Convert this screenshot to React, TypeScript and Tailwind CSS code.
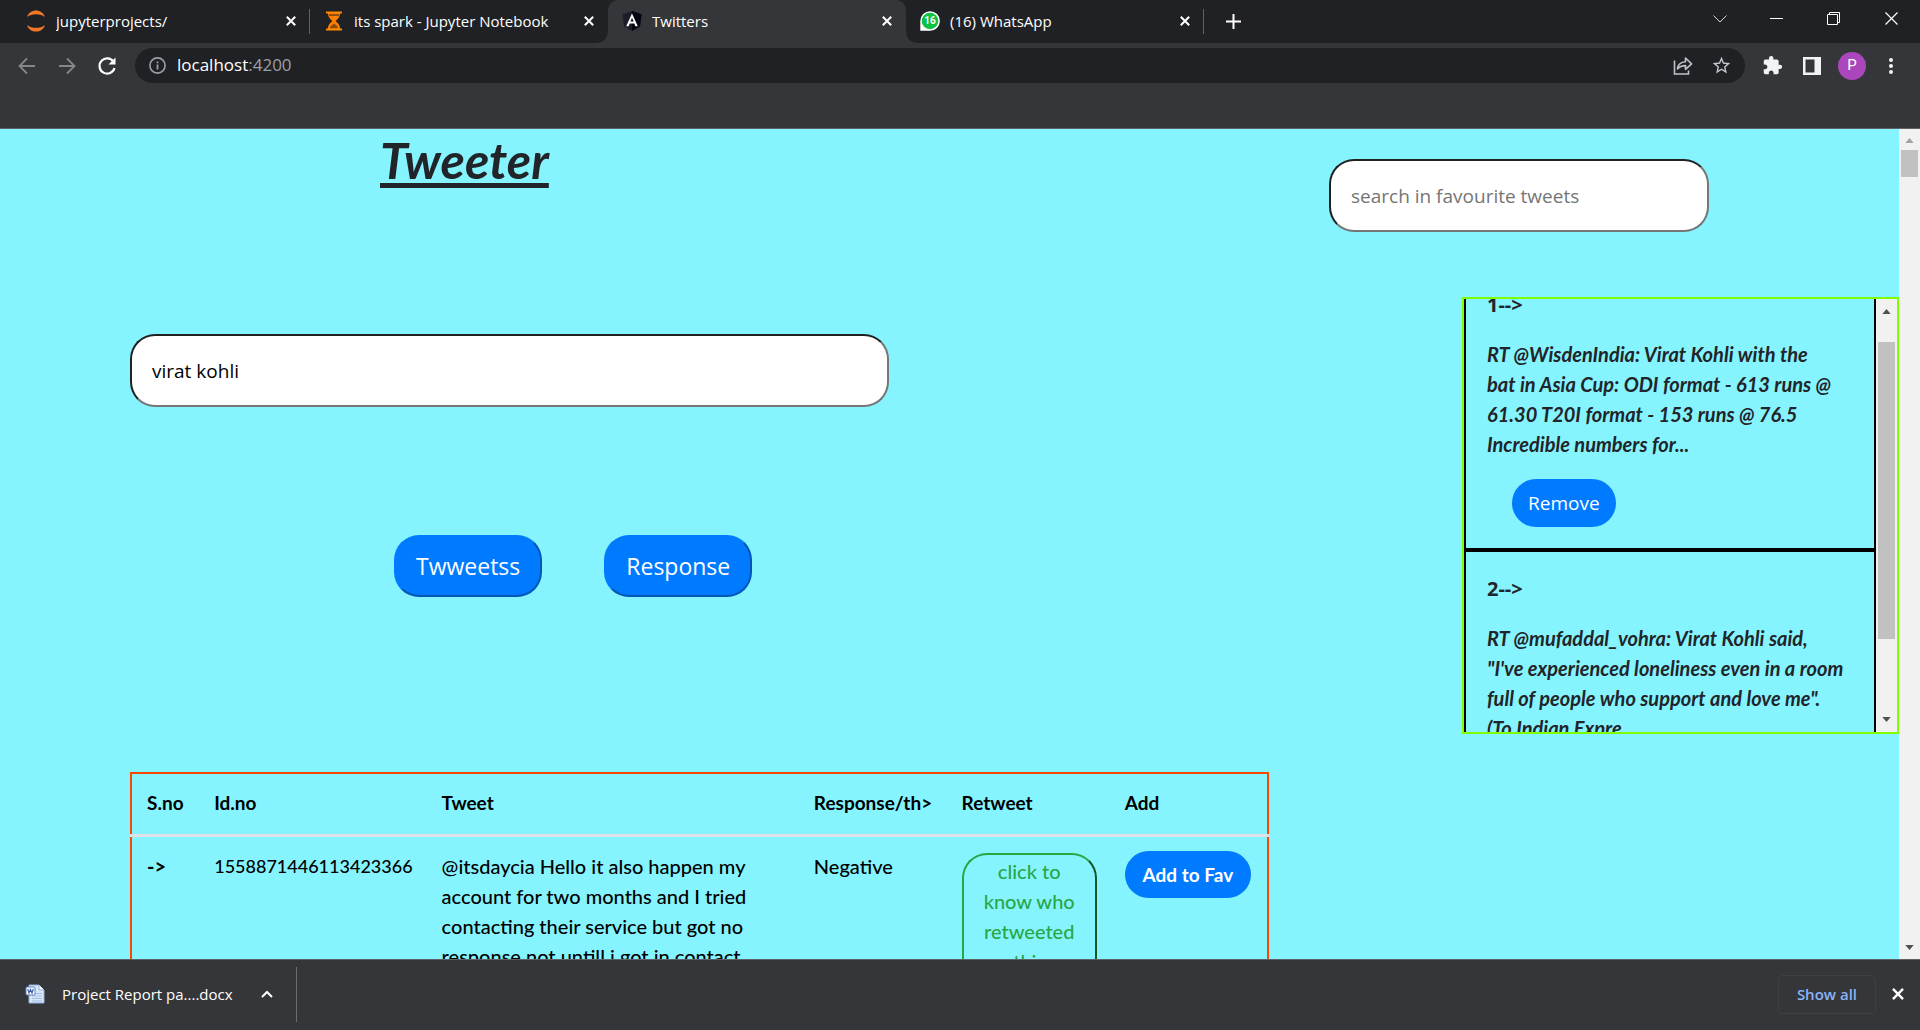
import React from "react";
import { MdExtension, MdStarOutline } from "react-icons/md";

type IconProps = { className?: string };

function CloseIcon({ className = "h-[10px] w-[10px]" }: IconProps) {
  return (
    <svg viewBox="0 0 10 10" className={className} fill="none" stroke="currentColor" strokeWidth="2">
      <path d="M0.8 0.8 L9.2 9.2 M9.2 0.8 L0.8 9.2" />
    </svg>
  );
}

function JupyterIcon() {
  return (
    <svg viewBox="0 0 20 26" className="h-[26px] w-5" fill="#f37726">
      <path d="M1 9 C3.500 0.200 16.500 0.200 19 9 C14.500 5.200 5.500 5.200 1 9Z" />
      <path d="M1 17 C3.500 25.800 16.500 25.800 19 17 C14.500 20.800 5.500 20.800 1 17Z" />
    </svg>
  );
}

function HourglassIcon() {
  return (
    <svg viewBox="0 0 20 20" className="h-5 w-5">
      <path d="M4 2 C4 7 7 8.500 8.500 10 C7 11.500 4 13 4 18 H16 C16 13 13 11.500 11.500 10 C13 8.500 16 7 16 2Z" fill="#ff8000" />
      <path d="M5 4 H15" stroke="#202124" strokeWidth="1" />
      <path d="M6 17.500 C6 14.500 8.500 14 10 12.500 C11.500 14 14 14.500 14 17.500Z" fill="#8a4a0a" />
      <path d="M2 1.500 H18 M2 18.500 H18" stroke="#ff8a00" strokeWidth="2" />
    </svg>
  );
}

function AngularIcon() {
  return (
    <svg viewBox="0 0 20 20" className="h-5 w-5">
      <path d="M10 0 L19.500 3.300 L18 15.500 L10 20 L2 15.500 L0.500 3.300Z" fill="#1b1d29" />
      <path d="M10 0 L19.500 3.300 L18 15.500 L10 20Z" fill="#05060f" />
      <path d="M10 2.500 L4.200 15.300 H6.600 L7.700 12.500 H12.300 L13.400 15.300 H15.800Z M10 6.700 L11.600 10.600 H8.400Z" fill="#fff" fillRule="evenodd" />
    </svg>
  );
}

function WhatsAppIcon() {
  return (
    <span className="relative flex h-5 w-5 items-center justify-center">
      <svg viewBox="0 0 20 20" className="absolute inset-0 h-5 w-5">
        <path d="M0.300 19.800 V10 A9.800 9.800 0 1 1 10 19.800Z" fill="#fff" />
        <circle cx="10" cy="10" r="8.300" fill="#0cc143" />
      </svg>
      <span className="relative font-['Roboto'] text-[10px] font-bold leading-none text-white">16</span>
    </span>
  );
}

function ShareIcon() {
  return (
    <svg viewBox="0 0 20 20" className="h-5 w-5" fill="none" stroke="#bdc1c6" strokeWidth="1.600">
      <path d="M1.500 4.500 V18 H15.500 V14.500" />
      <path d="M4.500 13 C5 8.500 8 6 12.500 5.800 V2 L18.600 7.800 L12.500 13.300 V9.600 C9 9.600 6.500 10.500 4.500 13Z" strokeLinejoin="round" />
    </svg>
  );
}

function WordIcon() {
  return (
    <svg viewBox="0 0 20 20" className="h-5 w-5">
      <path d="M4 1 H14 L19 6 V19 H4Z" fill="#dce8f8" stroke="#8fb0dc" />
      <path d="M14 1 V6 H19" fill="#fff" stroke="#8fb0dc" />
      <path d="M7 9.500 H17 M7 12 H17 M7 14.500 H17 M7 17 H17" stroke="#9dbbe4" />
      <rect x="1" y="3" width="9" height="8" rx="1" fill="#fff" stroke="#5b80bd" />
      <path d="M2.800 5 L4 9 L5.500 5.500 L7 9 L8.300 5" fill="none" stroke="#3c5fa5" strokeWidth="1.200" />
    </svg>
  );
}

function Arrow({ down = false, tone = "#505050" }: { down?: boolean; tone?: string }) {
  return (
    <svg viewBox="0 0 10 6" className="h-[5px] w-[9px]">
      <path d={down ? "M0 0 H10 L5 6Z" : "M0 6 L5 0 L10 6Z"} fill={tone} />
    </svg>
  );
}

const tabs = [
  { title: "jupyterprojects/", icon: <JupyterIcon />, active: false, rule: true },
  { title: "its spark - Jupyter Notebook", icon: <HourglassIcon />, active: false, rule: false },
  { title: "Twitters", icon: <AngularIcon />, active: true, rule: false },
  { title: "(16) WhatsApp", icon: <WhatsAppIcon />, active: false, rule: true },
];

function TabStrip() {
  return (
    <header className="flex h-[43px] shrink-0 bg-[#202124] pl-3">
      {tabs.map((tab) => (
        <div
          key={tab.title}
          className={
            "relative flex w-[298px] items-center gap-[10px] pb-[2px] pl-[14px] pr-[14px] " +
            (tab.active ? "rounded-t-[10px] bg-[#35363a]" : "")
          }
        >
          {tab.active && (
            <>
              <span className="absolute -left-[10px] bottom-0 h-[10px] w-[10px] bg-[radial-gradient(circle_at_0_0,#202124_9px,#35363a_10px)]" />
              <span className="absolute -right-[10px] bottom-0 h-[10px] w-[10px] bg-[radial-gradient(circle_at_100%_0,#202124_9px,#35363a_10px)]" />
            </>
          )}
          {tab.icon}
          <span className="flex-1 truncate text-[15px] leading-5 text-white">{tab.title}</span>
          <button aria-label={"Close " + tab.title} className="text-white">
            <CloseIcon />
          </button>
          {tab.rule && <span className="absolute right-0 top-[9px] h-[25px] w-px bg-[#5f6368]" />}
        </div>
      ))}
      <button aria-label="New tab" className="ml-[22px] flex items-center pb-px text-white">
        <svg viewBox="0 0 15 15" className="h-[15px] w-[15px]" stroke="currentColor" strokeWidth="2">
          <path d="M7.500 0 V15 M0 7.500 H15" />
        </svg>
      </button>
      <div className="ml-auto flex h-[37px] text-white">
        <button aria-label="Search tabs" className="flex w-[57px] items-center justify-center">
          <svg viewBox="0 0 14 8" className="h-2 w-[14px]" fill="none" stroke="#d5d6d8">
            <path d="M0.500 0.500 L7 7 L13.500 0.500" />
          </svg>
        </button>
        <button aria-label="Minimize" className="flex w-[57px] items-center justify-center">
          <span className="h-px w-[13px] bg-white" />
        </button>
        <button aria-label="Restore" className="flex w-[57px] items-center justify-center">
          <svg viewBox="0 0 13 13" className="h-[13px] w-[13px]" fill="none" stroke="currentColor">
            <path d="M0.500 2.500 H10.500 V12.500 H0.500Z M2.500 2.500 V0.500 H12.500 V10.500 H10.500" />
          </svg>
        </button>
        <button aria-label="Close window" className="flex w-[58px] items-center justify-center">
          <svg viewBox="0 0 13 13" className="h-[13px] w-[13px]" fill="none" stroke="currentColor" strokeWidth="1.200">
            <path d="M0.500 0.500 L12.500 12.500 M12.500 0.500 L0.500 12.500" />
          </svg>
        </button>
      </div>
    </header>
  );
}

function Toolbar() {
  return (
    <div className="h-[86px] shrink-0 border-b border-[#5f6368] bg-[#35363a] pt-[5px]">
      <div className="flex h-[35px] items-center pl-[18px] pr-[26px]">
        <button aria-label="Back" className="text-[#85878a]">
          <svg viewBox="0 0 18 18" className="h-[18px] w-[18px]" fill="none" stroke="currentColor" strokeWidth="1.800">
            <path d="M17 9 H2 M9 1.500 L1.500 9 L9 16.500" />
          </svg>
        </button>
        <button aria-label="Forward" className="ml-[22px] text-[#85878a]">
          <svg viewBox="0 0 18 18" className="h-[18px] w-[18px]" fill="none" stroke="currentColor" strokeWidth="1.800">
            <path d="M1 9 H16 M9 1.500 L16.500 9 L9 16.500" />
          </svg>
        </button>
        <button aria-label="Reload" className="ml-[22px] text-white">
          <svg viewBox="0 0 18 18" className="h-[18px] w-[18px]" fill="none" stroke="currentColor" strokeWidth="2.200">
            <path d="M15.500 4.800 A7.600 7.600 0 1 0 16.500 11" />
            <path d="M17.500 0.500 V7.500 H10.500Z" fill="currentColor" stroke="none" />
          </svg>
        </button>
        <div className="ml-[19px] flex h-[35px] flex-1 items-center rounded-full bg-[#202124] pl-[14px] pr-[13px]">
          <svg viewBox="0 0 17 17" className="h-[17px] w-[17px]" fill="none" stroke="#9aa0a6" strokeWidth="1.600">
            <circle cx="8.500" cy="8.500" r="7.600" />
            <path d="M8.500 7.500 V12.500 M8.500 4.500 V6.200" strokeWidth="1.800" />
          </svg>
          <a href="#home" className="ml-[11px] flex-1 pb-px text-[17px] leading-6 text-white">
            localhost<span className="text-[#9aa0a6]">:4200</span>
          </a>
          <button aria-label="Share">
            <ShareIcon />
          </button>
          <button aria-label="Bookmark" className="ml-[18px] text-[#c4c7cb]">
            <MdStarOutline className="h-[21px] w-[21px]" />
          </button>
        </div>
        <button aria-label="Extensions" className="ml-[17px] text-[#f1f3f4]">
          <MdExtension className="h-[21px] w-[21px]" />
        </button>
        <button aria-label="Side panel" className="ml-[20px]">
          <svg viewBox="0 0 18 18" className="h-[18px] w-[18px]">
            <path d="M0 0 H18 V18 H0Z M2.500 2.500 V15.500 H11.500 V2.500Z" fill="#f1f3f4" fillRule="evenodd" />
          </svg>
        </button>
        <button aria-label="Profile" className="ml-[17px] flex h-7 w-7 items-center justify-center rounded-full bg-[#ab47bc] font-['Roboto'] text-[15px] text-white">
          P
        </button>
        <button aria-label="Menu" className="ml-[22px]">
          <svg viewBox="0 0 6 18" className="h-[18px] w-[6px]" fill="#f1f3f4">
            <circle cx="3" cy="3" r="2" />
            <circle cx="3" cy="9" r="2" />
            <circle cx="3" cy="15" r="2" />
          </svg>
        </button>
      </div>
    </div>
  );
}

const favourites = [
  {
    id: 1,
    lines: [
      "RT @WisdenIndia: Virat Kohli with the",
      "bat in Asia Cup: ODI format - 613 runs @",
      "61.30 T20I format - 153 runs @ 76.5",
      "Incredible numbers for...",
    ],
  },
  {
    id: 2,
    lines: [
      "RT @mufaddal_vohra: Virat Kohli said,",
      "\"I've experienced loneliness even in a room",
      "full of people who support and love me\".",
      "(To Indian Expre...",
    ],
  },
];

function Favourites() {
  return (
    <section className="ml-auto mt-[65px] flex h-[437px] w-[437px] overflow-hidden border-2 border-[#7fff00]">
      <div className="min-w-0 flex-1 overflow-hidden">
        {favourites.map((item, index) => (
          <article
            key={item.id}
            className={
              "border-2 border-black px-[21px] pb-[21px] text-xl leading-[30px] text-[#212529] " +
              (index === 0 ? "-mt-[11px]" : "pt-[22px]")
            }
          >
            <p className="text-xl font-bold leading-[30px]">{item.id}--&gt;</p>
            <p className="my-[19px] font-['Lato'] text-xl font-bold italic leading-[30px]">
              {item.lines.map((line) => (
                <span key={line} className="block whitespace-nowrap">
                  {line}
                </span>
              ))}
            </p>
            <button className="ml-[25px] mt-px h-12 rounded-[25px] bg-[#007bff] px-4 text-[19px] text-white">Remove</button>
          </article>
        ))}
      </div>
      <div className="flex w-[21px] flex-col items-center bg-[#f1f1f1] py-[10px]">
        <Arrow />
        <span className="mt-[28px] h-[297px] w-[17px] bg-[#c1c1c1]" />
        <span className="mt-auto flex">
          <Arrow down />
        </span>
      </div>
    </section>
  );
}

const tweet = [
  "@itsdaycia Hello it also happen my",
  "account for two months and I tried",
  "contacting their service but got no",
  "response not untill i got in contact",
];

function TweetTable() {
  return (
    <table className="mt-[175px] w-full table-fixed border-collapse border-2 border-[#ff4500] text-left align-top font-['Lato'] text-xl leading-[30px] text-black">
      <colgroup>
        <col className="w-[6%]" />
        <col className="w-[20%]" />
        <col className="w-[33%]" />
        <col className="w-[13%]" />
        <col className="w-[14%]" />
        <col className="w-[14%]" />
      </colgroup>
      <thead>
        <tr className="border-b-[3px] border-[#dee2e6]">
          {["S.no", "Id.no", "Tweet", "Response/th>", "Retweet", "Add"].map((head) => (
            <th key={head} className="whitespace-nowrap px-[15px] pb-4 pt-[14px] text-[19px] font-bold leading-[30px] nth-[n+4]:px-3 nth-[n+6]:px-4">
              {head}
            </th>
          ))}
        </tr>
      </thead>
      <tbody>
        <tr className="align-top font-medium">
          <th className="px-[15px] py-[14px] font-bold">-&gt;</th>
          <td className="whitespace-nowrap px-[15px] py-[14px] text-lg leading-[30px]">1558871446113423366</td>
          <td className="px-[15px] py-[14px]">
            {tweet.map((line) => (
              <span key={line} className="block whitespace-nowrap">
                {line}
              </span>
            ))}
          </td>
          <td className="px-3 py-[14px]">Negative</td>
          <td className="px-3 py-4">
            <button className="w-full rounded-[25px] border-2 border-[#28a745] border-r-[#145523] px-3 pb-1 pt-px font-medium text-[#28a745]">
              click to know who retweeted this
            </button>
          </td>
          <td className="px-4 py-[14px]">
            <button className="h-[47px] w-full whitespace-nowrap rounded-[25px] bg-[#007bff] text-[19px] font-bold text-white">
              Add to Fav
            </button>
          </td>
        </tr>
      </tbody>
    </table>
  );
}

const fieldClass =
  "block h-[73px] rounded-[25px] border-2 border-b-[#767676] border-l-[#212121] border-r-[#767676] border-t-[#212121] bg-white px-5 text-[19px] outline-none placeholder:text-[#757575]";

const actionClass =
  "h-[62px] rounded-[25px] border-2 border-b-[#0056b3] border-l-[#007bff] border-r-[#0056b3] border-t-[#007bff] bg-[#007bff] px-5 text-[23px] text-white";

export default function App() {
  return (
    <div className="flex h-screen flex-col overflow-hidden font-['Open_Sans',sans-serif]">
      <TabStrip />
      <Toolbar />
      <div className="flex min-h-0 flex-1 bg-[#86f4ff]">
        <main className="grid min-w-0 flex-1 grid-cols-[1269fr_630fr] overflow-hidden">
          <div className="min-w-0 pl-[130px]">
            <h1 className="ml-[250px] h-[70px] font-['Lato'] text-[50px] font-bold italic leading-[62px] text-[#212529] underline decoration-[5px] underline-offset-4">
              Tweeter
            </h1>
            <input aria-label="Search tweets" defaultValue="virat kohli" className={fieldClass + " mt-[135px] w-2/3"} />
            <div className="ml-[264px] mt-32 flex gap-[62px]">
              <button className={actionClass}>Twweetss</button>
              <button className={actionClass}>Response</button>
            </div>
            <TweetTable />
          </div>
          <div className="min-w-0 pt-[30px]">
            <div className="ml-[60px] mr-[190px]">
              <input aria-label="Search favourites" placeholder="search in favourite tweets" className={fieldClass + " w-full"} />
            </div>
            <Favourites />
          </div>
        </main>
        <div className="flex w-[21px] flex-col items-center bg-[#f1f1f1] py-[9px]">
          <Arrow tone="#a3a3a3" />
          <span className="mt-[7px] h-[27px] w-[17px] bg-[#c1c1c1]" />
          <span className="mt-auto flex">
            <Arrow down />
          </span>
        </div>
      </div>
      <footer className="flex h-[71px] shrink-0 items-center border-t border-[#5f6368] bg-[#35363a] pb-[2px] pl-[25px] pr-[16px]">
        <WordIcon />
        <span className="ml-[17px] text-[15px] leading-6 text-white">Project Report pa....docx</span>
        <button aria-label="Download options" className="ml-[28px] text-white">
          <svg viewBox="0 0 12 8" className="h-2 w-3" fill="none" stroke="currentColor" strokeWidth="2">
            <path d="M1 7 L6 2 L11 7" />
          </svg>
        </button>
        <span className="ml-[23px] h-[55px] w-px bg-[#6b6d70]" />
        <button className="ml-auto h-[39px] rounded-[5px] border border-[#3f4044] px-[18px] text-[15px] font-semibold text-[#8ab4f8]">
          Show all
        </button>
        <button aria-label="Close downloads" className="ml-4 text-white">
          <CloseIcon className="h-3 w-3" />
        </button>
      </footer>
    </div>
  );
}
